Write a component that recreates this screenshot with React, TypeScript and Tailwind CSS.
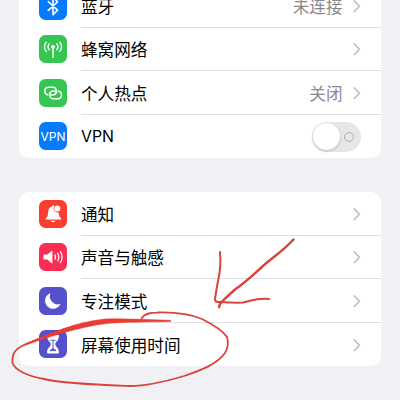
import type { ReactNode } from "react";

const line = { fill: "none", stroke: "#fff", strokeLinecap: "round", strokeLinejoin: "round" } as const;

function Tile({ color, children }: { color: string; children: ReactNode }) {
  return (
    <svg viewBox="0 0 28 28" className={`h-7 w-7 shrink-0 rounded-[6.5px] ${color}`}>
      {children}
    </svg>
  );
}

const BluetoothIcon = (
  <Tile color="bg-[#057bfa]">
    <path d="M9.3 9.6 18.5 18.2 14 22.6V5.4L18.5 9.8 9.3 18.4" {...line} strokeWidth="1.6" />
  </Tile>
);

const CellularIcon = (
  <Tile color="bg-[#34c553]">
    <circle cx="14" cy="11.8" r="1.9" fill="#fff" />
    <path d="M14 12v10.6" {...line} strokeWidth="1.4" />
    <path d="M10.2 8.9a4.6 4.6 0 0 0 0 5.8M17.8 8.9a4.6 4.6 0 0 1 0 5.8M7.2 7.2a7 7 0 0 0 0 9.2M20.8 7.2a7 7 0 0 1 0 9.2" {...line} strokeWidth="1.4" />
  </Tile>
);

const HotspotIcon = (
  <Tile color="bg-[#34c553]">
    <path d="M8.8 15.900A3.900 3.900 0 0 1 9.600 8.200H13.600A3.900 3.900 0 0 1 13.600 16H12.700A2.300 2.300 0 0 1 10.500 14.200" {...line} strokeWidth="1.500" />
    <path d="M19.400 12.100A3.900 3.900 0 0 1 18.600 19.800H14.600A3.900 3.900 0 0 1 14.600 12H15.500A2.300 2.300 0 0 1 17.700 13.800" {...line} strokeWidth="1.500" />
  </Tile>
);

const VpnIcon = (
  <div className="flex h-7 w-7 shrink-0 items-center justify-center rounded-[6.5px] bg-[#057bfa] pt-px font-['Inter','Liberation_Sans',sans-serif] text-[12px] leading-none text-white">
    VPN
  </div>
);

const BellIcon = (
  <Tile color="bg-[#fb3d30]">
    <path d="M6.300 19.400c0-1.200 2.200-2.200 2.500-4.200.5-4 .5-7.700 4.300-8.600.2-1.600 1.900-1.600 2.200-.2a4 4 0 0 0 4.300 6c.3 4.300 2.600 5.300 2.700 7Z" fill="#fff" />
    <path d="M11.600 20.800h4.900c-.5 1.900-4.400 1.900-4.900 0Z" fill="#fff" />
    <circle cx="18.300" cy="8.500" r="3" fill="#fff" />
  </Tile>
);

const SoundIcon = (
  <Tile color="bg-[#fc2d55]">
    <path d="M5.200 11.500h3.200L12.600 8q.8-.5.8.4v11.400q0 .9-.8.4l-4.200-3.600H5.200q-.7 0-.7-.7v-3.700q0-.7.700-.7Z" fill="#fff" />
    <path d="M16 11.900a4.400 4.400 0 0 1 0 4.300M18.700 10.300a7.200 7.200 0 0 1 0 7.500M21.400 8.600a10.300 10.300 0 0 1 0 10.900" {...line} strokeWidth="1.250" />
  </Tile>
);

const MoonIcon = (
  <Tile color="bg-[#5551cd]">
    <path d="M11.600 6.200A8 8 0 1 0 21.500 16.800 7.800 7.800 0 0 1 11.600 6.200Z" fill="#fff" />
  </Tile>
);

const HourglassIcon = (
  <Tile color="bg-[#5551cd]">
    <path d="M9 5h10q1 0 1 1c0 4.500-3.800 5.800-3.800 8.200s3.800 3.700 3.800 8.200q0 1-1 1H9q-1 0-1-1c0-4.500 3.800-5.800 3.800-8.200S8 10.500 8 6q0-1 1-1Z" fill="#fff" />
    <path d="M11.500 10.300h5M14 10.500V19M11 20.600c.8-1 1.800-1.100 3-1.900 1.200.8 2.200.9 3 1.900Z" fill="#5551cd" stroke="#5551cd" strokeWidth="1" />
  </Tile>
);

function Chevron() {
  return (
    <svg viewBox="0 0 8 14" className="ml-[10.500px] h-[14px] w-2 shrink-0">
      <path d="M1.300 1.900 6.400 7.200 1.300 12.500" fill="none" stroke="#bebec0" strokeWidth="1.600" strokeLinecap="round" strokeLinejoin="round" />
    </svg>
  );
}

function Toggle() {
  return (
    <div className="flex h-[30px] w-[49.500px] items-center justify-between rounded-full bg-[#e7e7e8] pr-[7px] pl-[1.500px]">
      <div className="h-[27px] w-[27px] rounded-full bg-white shadow-[0_1px_3px_rgba(0,0,0,0.22)]" />
      <div className="h-[10px] w-[10px] rounded-full border border-[#b0b0b0]" />
    </div>
  );
}

type Item = { icon: ReactNode; label: string; value?: string; toggle?: boolean };

function Row({ item, last }: { item: Item; last: boolean }) {
  return (
    <div className="flex h-[43.500px] items-center pl-5">
      {item.icon}
      <div className={`ml-[14px] flex h-full min-w-0 flex-1 items-center border-[#dfdfe1] pt-px pr-[20px] ${last ? "" : "border-b"}`}>
        <span className={`flex-1 whitespace-nowrap pt-px leading-none text-black ${item.toggle ? "font-['Inter','Liberation_Sans',sans-serif] text-[15.800px]" : "text-[16.600px]"}`}>
          {item.label}
        </span>
        {item.value && <span className="pt-px text-[16.600px] leading-none text-[#89898c]">{item.value}</span>}
        {item.toggle ? <Toggle /> : <Chevron />}
      </div>
    </div>
  );
}

function Group({ items }: { items: Item[] }) {
  return (
    <section className="rounded-[10px] bg-white">
      {items.map((item, i) => (
        <Row key={item.label} item={item} last={i === items.length - 1} />
      ))}
    </section>
  );
}

const network: Item[] = [
  { icon: BluetoothIcon, label: "蓝牙", value: "未连接" },
  { icon: CellularIcon, label: "蜂窝网络" },
  { icon: HotspotIcon, label: "个人热点", value: "关闭" },
  { icon: VpnIcon, label: "VPN", toggle: true },
];

const system: Item[] = [
  { icon: BellIcon, label: "通知" },
  { icon: SoundIcon, label: "声音与触感" },
  { icon: MoonIcon, label: "专注模式" },
  { icon: HourglassIcon, label: "屏幕使用时间" },
];

// Hand-drawn marker strokes over the list: a loop and an arrow.
function Marker() {
  return (
    <svg viewBox="0 0 400 400" className="pointer-events-none absolute inset-0 h-[400px] w-[400px]" fill="none" stroke="#d8443c" strokeLinecap="round" strokeLinejoin="round">
      <path d="M141.500 318.500C144 314 149 312.500 157 312.500C174 312 188 313 202 319C212 324 223 331 227 337C228.500 342 228 348 225 353C217 364 202 370 184 376C164 382 145 386 130 386C102 385 66 384 44 379C27 376 15 370 12.500 363C12 353 15 350 22 346C32 341 43 338 55 333" strokeWidth="1.800" />
      <path d="M27 343.500C48 334 75 322 105 319C120 318.500 145 319.500 170.500 320.300Q171.500 321 170.500 321.500C145 322 125 322 107 323.500C78 327 49 337 27 344.500Z" fill="#e93c32" stroke="#e93c32" strokeWidth=".5" />
      <path d="M293.500 239.500C283 251 272 258 263 266C253 275 247 281 235 289.500C228 296 223 300 220 304L219 307" strokeWidth="2.500" />
      <path d="M220 252C221 263 220.500 271 218 281C217 286 216 292 215 299Q215 302 218 302C227 302.500 235 303 243 302.500C252 301 254 298 269 299" strokeWidth="2" />
    </svg>
  );
}

export default function App() {
  return (
    <main className="relative h-[400px] w-[400px] overflow-hidden bg-[#f1f0f5] font-['Noto_Sans_CJK_SC',sans-serif]">
      <div className="-mt-4 flex flex-col gap-[34px] pr-[19px] pl-[19px]">
        <Group items={network} />
        <Group items={system} />
      </div>
      <Marker />
    </main>
  );
}
